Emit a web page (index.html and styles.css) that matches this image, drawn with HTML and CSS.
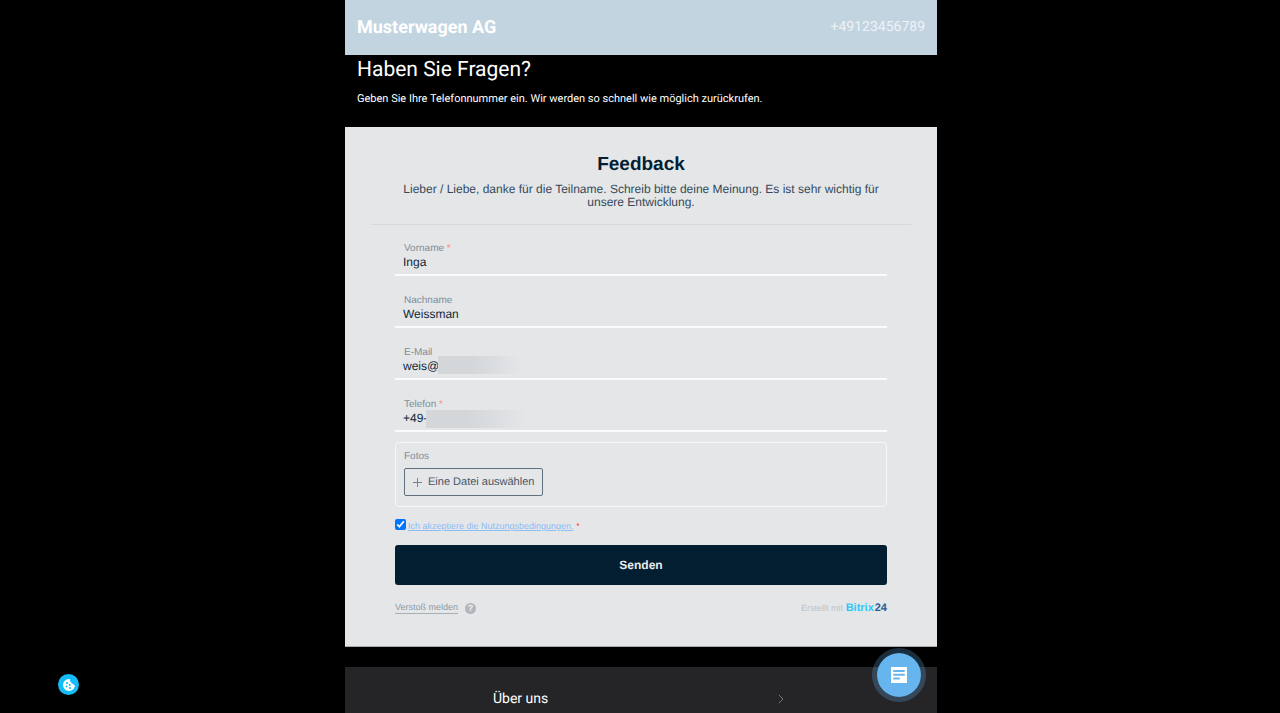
FILE: index.html
```html
<!DOCTYPE html>
<html lang="de">
<head>
<meta charset="utf-8">
<meta name="viewport" content="width=device-width, initial-scale=1">
<title>Musterwagen AG</title>
<link rel="stylesheet" href="styles.css">
</head>
<body>
<div class="page">
  <header class="topbar">
    <div class="brand">Musterwagen AG</div>
    <a class="phone" href="tel:+49123456789">+49123456789</a>
  </header>
  <section class="intro">
    <h1 class="intro-title">Haben Sie Fragen?</h1>
    <p class="intro-text">Geben Sie Ihre Telefonnummer ein. Wir werden so schnell wie möglich zurückrufen.</p>
  </section>
  <main class="card">
    <div class="card-head">
      <h2 class="card-title">Feedback</h2>
      <p class="card-text">Lieber / Liebe, danke für die Teilname. Schreib bitte deine Meinung. Es ist sehr wichtig für unsere Entwicklung.</p>
    </div>
    <form class="form">
      <div class="fields">
        <div class="field">
          <label class="label" for="first">Vorname <span class="star">*</span></label>
          <input class="input" id="first" type="text" value="Inga">
        </div>
        <div class="field">
          <label class="label" for="last">Nachname</label>
          <input class="input" id="last" type="text" value="Weissman">
        </div>
        <div class="field">
          <label class="label" for="mail">E-Mail</label>
          <input class="input" id="mail" type="text" value="weis@r">
          <span class="mask mask-mail"></span>
        </div>
        <div class="field">
          <label class="label" for="tel">Telefon <span class="star">*</span></label>
          <input class="input" id="tel" type="tel" value="+49-">
          <span class="mask mask-tel"></span>
        </div>
      </div>
      <div class="upload">
        <div class="label">Fotos</div>
        <button class="file-button" type="button">
          <svg class="plus" viewBox="0 0 9 9" aria-hidden="true"><path d="M4.500 0v9M0 4.500h9"/></svg>
          Eine Datei auswählen
        </button>
      </div>
      <div class="terms">
        <input class="check" id="terms" type="checkbox" checked>
        <label class="terms-label" for="terms"><a class="terms-link" href="#terms">Ich akzeptiere die Nutzungsbedingungen.</a> <span class="terms-star">*</span></label>
      </div>
      <button class="submit" type="submit">Senden</button>
      <div class="form-foot">
        <div class="report">
          <a class="report-link" href="#report">Verstoß melden</a>
          <span class="help">?</span>
        </div>
        <div class="made">Erstellt mit <span class="logo">Bitrix<span class="logo-num">24</span></span></div>
      </div>
    </form>
  </main>
  <nav class="menu">
    <a class="menu-item" href="#about">Über uns
      <svg class="chevron" viewBox="0 0 6 10" aria-hidden="true"><path d="M.8.8 5 5 .8 9.200"/></svg>
    </a>
  </nav>
  <button class="chat" type="button" aria-label="Chat">
    <svg class="chat-icon" viewBox="0 0 16 16" aria-hidden="true"><path fill="#fff" d="M0 0h16v16H0z"/><path fill="none" stroke="#67b5ee" stroke-width="2" stroke-linecap="round" d="M3 4h10M3 7.800h10M3 11.600h5"/></svg>
  </button>
</div>
<button class="cookie" type="button" aria-label="Cookies">
  <svg class="cookie-icon" viewBox="0 0 12 12" aria-hidden="true"><path fill="#fff" d="M6 0a6 6 0 1 0 6 6c-1 .2-1.800-.4-1.800-1.300C9 5 8 4 8.300 2.900 7 2.800 6.500 1.300 7.200.2A6 6 0 0 0 6 0z"/><g fill="#14bdf7"><circle cx="4" cy="4" r="1.100"/><circle cx="3.500" cy="7.600" r="1"/><circle cx="6.600" cy="6" r="1"/><circle cx="7" cy="9" r="1"/></g></svg>
</button>
</body>
</html>
```

FILE: styles.css
```css
* { box-sizing: border-box; }
body {
  margin: 0;
  padding-left: 2px;
  background: #000;
  font-family: "Liberation Sans", Arial, sans-serif;
  text-rendering: geometricPrecision;
  min-height: 100vh;
  overflow-x: hidden;
}
h1, h2, p { margin: 0; font-weight: 400; }
button { font-family: inherit; cursor: pointer; }
.page { position: relative; max-width: 592px; margin: 0 auto; }
.topbar {
  display: flex;
  align-items: center;
  justify-content: space-between;
  padding: 16px 12px;
  background: #c2d4e0;
  font-family: Roboto, sans-serif;
  line-height: 23px;
}
.brand { font-size: 18px; font-weight: 700; color: #fff; }
.phone { font-size: 14px; color: #edf3f7; text-decoration: none; }
.intro { padding: 2px 12px 21px; color: #fff; font-family: Roboto, sans-serif; }
.intro-title { font-size: 21px; line-height: 26px; margin-bottom: 9px; }
.intro-text { font-size: 11px; line-height: 14px; }
.card { background: #e4e6e8; padding: 27px 26px 31px; border-bottom: 1px solid #a8aaac; }
.card-head { padding: 0 24px 15px; border-bottom: 1px solid #d6d8da; text-align: center; }
.card-title { font-size: 19px; font-weight: 700; line-height: 22px; color: #021f33; margin-bottom: 7px; }
.card-text { font-size: 12px; line-height: 13px; color: #35495a; }
.form { padding: 17px 24px 0; }
.fields { display: grid; gap: 18px; }
.field { position: relative; padding: 0 8px 5px; border-bottom: 2px solid #fafbfc; }
.label { display: block; font-size: 10px; line-height: 13px; color: #7f8c98; padding-left: 1px; }
.star { color: #ff8f8f; }
.input {
  display: block;
  width: 100%;
  height: 14px;
  padding: 0;
  border: 0;
  outline: 0;
  background: transparent;
  font: 12px/14px "Liberation Sans", Arial, sans-serif;
  text-rendering: inherit;
  color: #12293b;
}
.mask {
  position: absolute;
  top: 10px;
  width: 84px;
  height: 18px;
  background: linear-gradient(90deg, #d3d7da 40%, #e4e6e8);
}
.mask-mail { left: 43px; }
.mask-tel { left: 31px; top: 12px; width: 100px; }
.upload { margin-top: 10px; padding: 7px 8px 10px; border: 1px solid #f6f7f8; border-radius: 4px; }
.upload .label { padding-left: 0; }
.file-button {
  display: flex;
  align-items: center;
  gap: 6px;
  height: 28px;
  margin-top: 5px;
  padding: 0 8px;
  border: 1px solid #60707e;
  border-radius: 2px;
  background: transparent;
  font-size: 11px;
  text-rendering: inherit;
  color: #455766;
}
.plus { width: 9px; height: 9px; fill: none; stroke: #768490; }
.terms { display: flex; align-items: flex-start; gap: 2px; margin-top: 12px; line-height: 12px; }
.check { width: 11px; height: 11px; margin: 0; accent-color: #0075ff; }
.terms-label { font-size: 9px; padding-top: 1px; }
.terms-link { color: #8ebcf7; }
.terms-star { color: #ff4040; }
.submit {
  display: block;
  width: 100%;
  height: 40px;
  margin-top: 13px;
  border: 0;
  border-radius: 3px;
  background: #021e30;
  font-size: 12px;
  font-weight: 700;
  text-rendering: inherit;
  color: #e8ebed;
}
.form-foot { display: flex; justify-content: space-between; align-items: center; margin-top: 16px; line-height: 14px; }
.report { display: flex; align-items: center; gap: 7px; }
.report-link { font-size: 9px; line-height: 11px; color: #8e9aa5; text-decoration: none; border-bottom: 1px solid #a5afb7; }
.help {
  width: 11px;
  height: 11px;
  border-radius: 50%;
  background: #b1b6bc;
  font-size: 9px;
  font-weight: 700;
  line-height: 11px;
  text-align: center;
  color: #f0f2f3;
}
.made { font-size: 9px; color: #bcc2c8; }
.logo { font-size: 11px; font-weight: 700; color: #2fc6f6; }
.logo-num { color: #215f98; margin-left: 1px; }
.menu { margin-top: 20px; padding: 20px 148px 2px; background: #252528; font-family: Roboto, sans-serif; }
.menu-item {
  display: flex;
  align-items: center;
  justify-content: space-between;
  padding-right: 5px;
  font-size: 14px;
  line-height: 24px;
  color: #fff;
  text-decoration: none;
}
.chevron { width: 6px; height: 10px; fill: none; stroke: #77777a; }
.chat {
  position: fixed;
  left: calc(50% + 232px);
  bottom: 11px;
  display: grid;
  place-items: center;
  width: 54px;
  height: 54px;
  padding: 0;
  border: 5px solid rgba(103, 181, 238, 0.25);
  border-radius: 50%;
  background: #67b5ee;
  background-clip: padding-box;
}
.chat-icon { width: 16px; height: 16px; }
.cookie {
  position: fixed;
  left: 58px;
  bottom: 18px;
  display: grid;
  place-items: center;
  width: 21px;
  height: 21px;
  padding: 0;
  border: 0;
  border-radius: 50%;
  background: #14bdf7;
}
.cookie-icon { width: 12px; height: 12px; }
```
